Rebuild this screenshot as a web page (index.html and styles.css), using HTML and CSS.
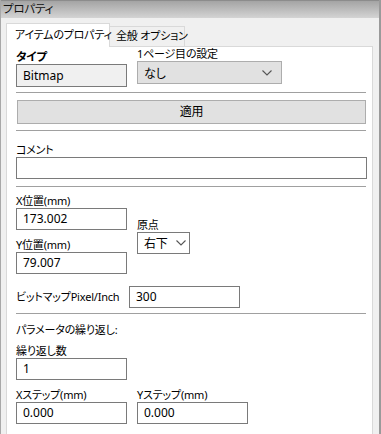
FILE: index.html
```html
<!DOCTYPE html>
<html lang="ja">
<head>
<meta charset="utf-8">
<link rel="stylesheet" href="styles.css">
</head>
<body>
<div class="window">
  <div class="titlebar">プロパティ</div>
  <div class="client">
    <div class="tabs">
      <div class="tab active">アイテムのプロパティ</div>
      <div class="tab">全般 オプション</div>
    </div>
    <div class="panel">
      <div class="row-top">
        <div class="col">
          <div class="lbl bold">タイプ</div>
          <div class="box ro">Bitmap</div>
        </div>
        <div class="col">
          <div class="lbl">1ページ目の設定</div>
          <div class="select wide">
            <span>なし</span>
            <svg class="chev" width="10" height="6" viewBox="0 0 10 6"><path d="M0.5 0.5 L5 5 L9.5 0.5" fill="none" stroke="#555" stroke-width="1.1"/></svg>
          </div>
        </div>
      </div>
      <hr class="sep sep1">
      <div class="button">適用</div>
      <hr class="sep sep2">
      <div class="lbl comment-lbl">コメント</div>
      <div class="box full"></div>
      <hr class="sep sep3">
      <div class="pos">
        <div class="col">
          <div class="lbl">X位置(mm)</div>
          <div class="box">173.002</div>
          <div class="lbl ylbl">Y位置(mm)</div>
          <div class="box">79.007</div>
        </div>
        <div class="col origin">
          <div class="lbl">原点</div>
          <div class="select small">
            <span>右下</span>
            <svg class="chev" width="10" height="6" viewBox="0 0 10 6"><path d="M0.5 0.5 L5 5 L9.5 0.5" fill="none" stroke="#555" stroke-width="1.1"/></svg>
          </div>
        </div>
      </div>
      <div class="ppi">
        <span class="lbl">ビットマップPixel/Inch</span>
        <div class="box">300</div>
      </div>
      <hr class="sep sep4">
      <div class="lbl rep">パラメータの繰り返し:</div>
      <div class="lbl cnt">繰り返し数</div>
      <div class="box">1</div>
      <div class="steps">
        <div class="col">
          <div class="lbl">Xステップ(mm)</div>
          <div class="box">0.000</div>
        </div>
        <div class="col">
          <div class="lbl">Yステップ(mm)</div>
          <div class="box">0.000</div>
        </div>
      </div>
    </div>
  </div>
</div>
</body>
</html>
```

FILE: styles.css
```css
* { box-sizing: border-box; }
html, body { margin: 0; padding: 0; }
body {
  width: 381px;
  height: 434px;
  overflow: hidden;
  background: #f0f0f0;
  font-family: "Noto Sans", "Noto Sans CJK JP", sans-serif;
  font-size: 12px;
  color: #000;
}
.window {
  height: 434px;
  border-right: 2px solid #9a9a9a;
  border-left: 1px solid #a8a8a8;
  display: flex;
  flex-direction: column;
}
.titlebar, .tab, .lbl, .select, .button {
  font-family: "Noto Sans", "Noto Sans CJK JP", sans-serif;
  font-feature-settings: "palt" 1;
  font-size: 11px;
  letter-spacing: -0.2px;
}
.titlebar {
  height: 18px;
  background: linear-gradient(#a4a4a4, #d4d4d4);
  border-top: 1px solid #8c8c8c;
  padding-left: 2px;
  line-height: 16px;
  color: #111;
  font-size: 11.5px;
}
.client {
  flex: 1;
  padding: 5px 6px 0 5px;
  display: flex;
  flex-direction: column;
}
.tabs {
  display: flex;
  align-items: flex-end;
  height: 23px;
}
.tab {
  height: 20px;
  line-height: 18px;
  border: 1px solid #d9d9d9;
  border-bottom: none;
  background: #f0f0f0;
  white-space: nowrap;
  padding-left: 6px;
  width: 75px;
  border-left: none;
}
.tab.active {
  height: 24px;
  line-height: 22px;
  background: #fff;
  width: 104px;
  padding-left: 8px;
  border-left: 1px solid #d9d9d9;
  margin-bottom: -1px;
  position: relative;
  z-index: 1;
}
.panel {
  flex: 1;
  background: #fff;
  border: 1px solid #d9d9d9;
  border-bottom: none;
  width: 367px;
  padding: 0 6px 0 9px;
  display: flex;
  flex-direction: column;
  align-items: flex-start;
}
.lbl {
  line-height: 14px;
  height: 14px;
  white-space: nowrap;
}
.bold { font-weight: bold; font-size: 11.5px; }
.row-top {
  display: flex;
  gap: 10px;
}
.row-top .col:first-child { padding-top: 3px; }
.col { display: flex; flex-direction: column; }
.box {
  width: 111px;
  height: 22px;
  border: 1px solid #7a7a7a;
  background: #fff;
  padding-left: 6px;
  line-height: 20px;
  font-family: "Noto Sans", sans-serif;
  font-size: 12px;
}
.box.ro {
  background: #f0f0f0;
  height: 23px;
  line-height: 21px;
}
.select {
  display: flex;
  align-items: center;
  justify-content: space-between;
  border: 1px solid #7a7a7a;
  padding: 0 9px 0 6px;
  font-size: 12px;
}
.select.wide {
  width: 145px;
  height: 23px;
  background: #e1e1e1;
  border-color: #adadad;
}
.select.small {
  width: 53px;
  height: 22px;
  background: #fff;
  padding-right: 3px;
}
.chev { display: block; }
.sep {
  width: 350px;
  height: 0;
  border: none;
  border-top: 1px solid #a0a0a0;
  margin: 0;
}
.sep1 { margin-top: 5px; }
.button {
  margin-top: 7px;
  width: 349px;
  margin-left: 1px;
  height: 24px;
  background: #e1e1e1;
  border: 1px solid #adadad;
  text-align: center;
  line-height: 22px;
  font-size: 12px;
}
.sep2 { margin-top: 6px; }
.comment-lbl { margin-top: 12px; }
.box.full { width: 351px; }
.sep3 { margin-top: 7px; }
.pos { display: flex; gap: 10px; margin-top: 7px; }
.ylbl { margin-top: 8px; }
.origin { padding-top: 24px; }
.ppi {
  display: flex;
  align-items: center;
  margin-top: 12px;
}
.ppi .lbl { width: 113px; }
.sep4 { margin-top: 5px; }
.rep { margin-top: 9px; }
.cnt { margin-top: 7px; }
.steps { display: flex; gap: 10px; margin-top: 8px; }
```
